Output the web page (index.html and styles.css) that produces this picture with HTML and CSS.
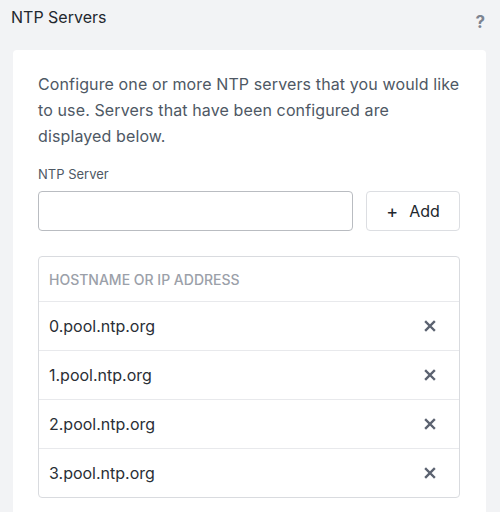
FILE: index.html
```html
<!DOCTYPE html>
<html>
<head>
<meta charset="utf-8">
<link rel="stylesheet" href="styles.css">
</head>
<body>
<div class="page">
  <div class="head">
    <h1 class="title">NTP Servers</h1>
    <span class="help">?</span>
  </div>
  <div class="card">
    <p class="desc">Configure one or more NTP servers that you would like to use. Servers that have been configured are displayed below.</p>
    <label class="label">NTP Server</label>
    <div class="form-row">
      <input class="input" type="text">
      <button class="btn"><span class="plus">+</span>Add</button>
    </div>
    <div class="table">
      <div class="th">HOSTNAME OR IP ADDRESS</div>
      <div class="tr"><span>0.pool.ntp.org</span><svg class="x" viewBox="0 0 12 12" width="12" height="12"><path d="M2 2L10 10M10 2L2 10" stroke="#5b6270" stroke-width="2.4" stroke-linecap="square"/></svg></div>
      <div class="tr"><span>1.pool.ntp.org</span><svg class="x" viewBox="0 0 12 12" width="12" height="12"><path d="M2 2L10 10M10 2L2 10" stroke="#5b6270" stroke-width="2.4" stroke-linecap="square"/></svg></div>
      <div class="tr"><span>2.pool.ntp.org</span><svg class="x" viewBox="0 0 12 12" width="12" height="12"><path d="M2 2L10 10M10 2L2 10" stroke="#5b6270" stroke-width="2.4" stroke-linecap="square"/></svg></div>
      <div class="tr"><span>3.pool.ntp.org</span><svg class="x" viewBox="0 0 12 12" width="12" height="12"><path d="M2 2L10 10M10 2L2 10" stroke="#5b6270" stroke-width="2.4" stroke-linecap="square"/></svg></div>
    </div>
  </div>
</div>
</body>
</html>
```
FILE: styles.css
```css
* { box-sizing: border-box; }
html, body { margin: 0; padding: 0; }
body {
  background: #f2f3f5;
  font-family: "Inter", "Liberation Sans", sans-serif;
  color: #22272e;
  width: 500px;
  height: 512px;
  overflow: hidden;
}
.page { padding: 0 14px 0 13px; }
.head {
  display: flex;
  justify-content: space-between;
  align-items: flex-start;
  height: 50px;
  padding-top: 7px;
}
.title {
  margin: 0 0 0 -2px;
  font-size: 16px;
  font-weight: 400;
  line-height: 20px;
  color: #22272e;
}
.help {
  margin-top: 5px;
  margin-right: 1px;
  font-size: 17px;
  font-weight: 700;
  color: #7d8491;
  line-height: 20px;
}
.card {
  background: #fff;
  border-radius: 4px 4px 0 0;
  padding: 21px 26px 30px 25px;
  height: 480px;
}
.desc {
  margin: 0;
  font-size: 16px;
  line-height: 26px;
  letter-spacing: 0.12px;
  color: #4e5864;
}
.label {
  display: block;
  margin-top: 16px;
  font-size: 13px;
  line-height: 18px;
  color: #4e5864;
}
.form-row {
  display: flex;
  gap: 13px;
  margin-top: 8px;
}
.input {
  flex: 1;
  height: 40px;
  border: 1px solid #b9bcc1;
  border-radius: 4px;
  font: inherit;
}
.btn {
  width: 94px;
  height: 40px;
  border: 1px solid #dcdee2;
  border-radius: 4px;
  background: #fff;
  font-family: inherit;
  font-size: 16px;
  color: #22272e;
  display: flex;
  align-items: center;
  justify-content: center;
}
.plus { font-size: 18px; margin-right: 11px; }
.table {
  margin-top: 25px;
  border: 1px solid #d9dbdf;
  border-radius: 4px;
}
.th {
  height: 44px;
  padding-left: 10px;
  display: flex;
  align-items: center;
  font-size: 14px;
  font-weight: 500;
  color: #9ba0a9;
}
.tr {
  height: 49px;
  border-top: 1px solid #e8e9ec;
  display: flex;
  align-items: center;
  justify-content: space-between;
  padding: 0 23px 0 10px;
  font-size: 16px;
  color: #2a2f36;
}
.x { display: block; }
```
